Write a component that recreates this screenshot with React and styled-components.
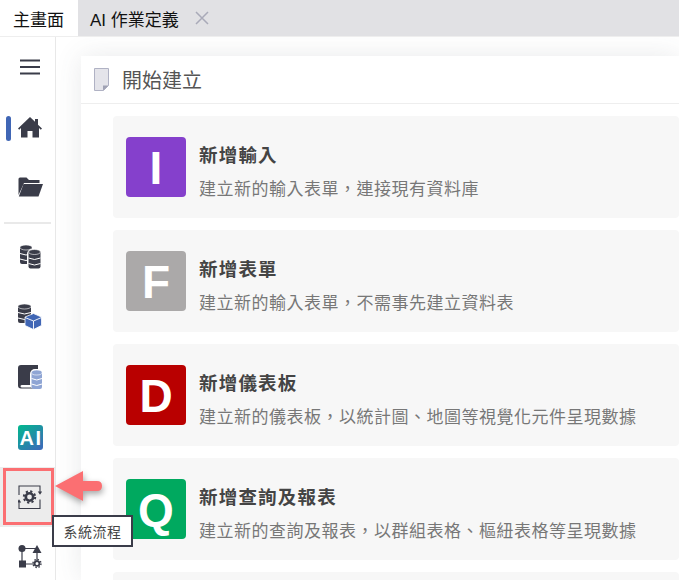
import styled, { createGlobalStyle } from 'styled-components';

const Global = createGlobalStyle`
  html, body { margin: 0; padding: 0; background: #fff; overflow: hidden; }
  body { font-family: "Liberation Sans", "Noto Sans CJK TC", sans-serif; }
`;

const items = [
  { letter: 'I', color: '#8540cc', title: '新增輸入', desc: '建立新的輸入表單\uFF0C連接現有資料庫' },
  { letter: 'F', color: '#aba9a9', title: '新增表單', desc: '建立新的輸入表單\uFF0C不需事先建立資料表' },
  { letter: 'D', color: '#b90000', title: '新增儀表板', desc: '建立新的儀表板\uFF0C以統計圖、地圖等視覺化元件呈現數據' },
  { letter: 'Q', color: '#00a95f', title: '新增查詢及報表', desc: '建立新的查詢及報表\uFF0C以群組表格、樞紐表格等呈現數據' },
];

function Db({ x, y, fill = '#3a3c49', w = 12 }) {
  const h = 20;
  return (
    <g transform={`translate(${x} ${y})`}>
      <rect x="0" y="1" width={w} height={h - 2} rx="2" fill={fill} />
      <ellipse cx={w / 2} cy="2.5" rx={w / 2} ry="2.5" fill={fill} stroke="#fff" strokeWidth="0.6" />
      <path d={`M0 8.5q${w / 2} 3 ${w} 0M0 14q${w / 2} 3 ${w} 0`} stroke="#fff" strokeWidth="1" fill="none" />
    </g>
  );
}

function App() {
  return (
    <Page>
      <Global />
      <TabBar>
        <Tab $active>主畫面</Tab>
        <Tab>
          AI 作業定義
          <CloseIcon viewBox="0 0 14 14">
            <path d="M1 1l12 12M13 1L1 13" stroke="#a9aab8" strokeWidth="1.5" fill="none" />
          </CloseIcon>
        </Tab>
      </TabBar>
      <Body>
        <Sidebar>
          <SideItem>
            <svg width="20" height="16" viewBox="0 0 20 16">
              <path d="M0 1.500h20M0 8h20M0 14.500h20" stroke="#3a3c49" strokeWidth="2.200" />
            </svg>
          </SideItem>
          <SideItem>
            <ActiveMark />
            <svg width="24" height="21" viewBox="0 0 24 21">
              <path d="M12 0L0 11.500l1.200 1.200L3 11v9.500h6.500V14h5v6.500H21V11l1.800 1.700L24 11.500 20 7.700V2h-3v2.800z" fill="#3a3c49" />
            </svg>
          </SideItem>
          <SideItem>
            <svg width="25" height="20" viewBox="0 0 25 20">
              <path d="M0.500 18V2Q0.500 0.500 2 0.500H8.500L11 3H21.500V6H6L0.500 18z" fill="#3a3c49" />
              <path d="M5.500 7H25L20.500 19.500H0.800z" fill="#3a3c49" />
            </svg>
          </SideItem>
          <Divider />
          <SideItem>
            <svg width="22" height="25" viewBox="0 0 22 25">
              <Db x="1" y="0" />
              <rect x="8" y="4" width="14" height="21" rx="5" fill="#fff" />
              <Db x="9.500" y="4.500" />
            </svg>
          </SideItem>
          <SideItem>
            <svg width="24" height="26" viewBox="0 0 24 26">
              <Db x="0" y="0" w="13" />
              <path d="M15.500 9.500l8 3.500v8.500l-8 4-8.500-4V13z" fill="#4066b5" stroke="#fff" strokeWidth="0.800" />
              <path d="M7 13.500l8.500 3.500 8-3.500M15.500 17v8.500" stroke="#fff" strokeWidth="0.900" fill="none" />
            </svg>
          </SideItem>
          <SideItem>
            <svg width="25" height="24" viewBox="0 0 25 24">
              <path d="M3 0h17v20H4q-1.500 0-1.500 1.200T4 22.500h16v1H3q-3 0-3-3V3q0-3 3-3z" fill="#3a3c49" />
              <rect x="12" y="4" width="13" height="20" rx="5" fill="#fff" />
              <Db x="13.500" y="5" fill="#8fa5d4" w="10.500" />
            </svg>
          </SideItem>
          <SideItem>
            <svg width="25" height="25" viewBox="0 0 25 25">
              <defs>
                <linearGradient id="aiGrad" x1="0" y1="0" x2="0.800" y2="1">
                  <stop offset="0" stopColor="#00b98d" />
                  <stop offset="1" stopColor="#3a6db8" />
                </linearGradient>
              </defs>
              <rect width="25" height="25" rx="3" fill="url(#aiGrad)" />
              <text x="13" y="19.500" textAnchor="middle" fontFamily="Liberation Sans" fontWeight="700" fontSize="20" letterSpacing="1.500" fill="#fff">AI</text>
            </svg>
          </SideItem>
          <SideItem $hover>
            <svg width="24" height="24" viewBox="0 0 24 24">
              <path d="M1 10V1H22V7M22 14.500V23.500H1V16" stroke="#3a3c49" strokeWidth="1.100" fill="none" />
              <path d="M19.800 6.500h4.400L22 9.800zM-1.200 17.500h4.400L1 14.200z" fill="#3a3c49" />
              <circle cx="11.500" cy="12" r="3.700" fill="none" stroke="#3a3c49" strokeWidth="2.600" />
              <circle cx="11.500" cy="12" r="5.700" fill="none" stroke="#3a3c49" strokeWidth="2" strokeDasharray="2.200 2.276" />
            </svg>
          </SideItem>
          <SideItem>
            <svg width="25" height="25" viewBox="0 0 25 25">
              <path d="M4 3.500h15M4 3.500v15M4 19h15M19 8v8" stroke="#3a3c49" strokeWidth="1.200" fill="none" />
              <circle cx="4" cy="3.500" r="3.500" fill="#3a3c49" />
              <path d="M19 0l4.500 8h-9z" fill="#3a3c49" />
              <rect x="1" y="15.500" width="7" height="7" fill="#3a3c49" />
              <circle cx="19" cy="18.500" r="2.400" fill="#fff" stroke="#3a3c49" strokeWidth="1.800" />
              <circle cx="19" cy="18.500" r="4" fill="none" stroke="#3a3c49" strokeWidth="1.400" strokeDasharray="1.500 1.640" />
            </svg>
          </SideItem>
        </Sidebar>
        <Main>
          <Card>
            <CardHeader>
              <svg width="15" height="23" viewBox="0 0 15 23">
                <path d="M0.500 0.500h14v17l-5 5h-9z" fill="#e4e4ea" stroke="#b0b2c4" strokeWidth="1" />
                <path d="M9 22.500v-5h5.500z" fill="#a0a2b4" />
              </svg>
              <CardTitle>開始建立</CardTitle>
            </CardHeader>
            <List>
              {items.map((item) => (
                <Row key={item.letter}>
                  <Badge $color={item.color}>{item.letter}</Badge>
                  <RowText>
                    <RowTitle>{item.title}</RowTitle>
                    <RowDesc>{item.desc}</RowDesc>
                  </RowText>
                </Row>
              ))}
              <Row />
            </List>
          </Card>
        </Main>
      </Body>
      <Highlight />
      <Arrow width="48" height="32" viewBox="0 0 48 32">
        <path d="M0 15L28 0V10H42Q47 10 47 15T42 20H28V30z" fill="#fb6f72" />
      </Arrow>
      <Tooltip>系統流程</Tooltip>
    </Page>
  );
}

const Page = styled.div`
  position: relative;
  width: 679px;
  height: 580px;
  overflow: hidden;
  background: #fff;
`;

const TabBar = styled.div`
  display: flex;
  height: 36px;
  background: #e1e1e4;
  border-bottom: 1px solid #eeeeee;
`;

const Tab = styled.div`
  display: flex;
  align-items: center;
  width: ${(p) => (p.$active ? '78px' : 'auto')};
  padding-left: ${(p) => (p.$active ? '13px' : '12px')};
  box-sizing: border-box;
  background: ${(p) => (p.$active ? '#fff' : 'transparent')};
  font-size: 17px;
  color: #111;
`;

const CloseIcon = styled.svg`
  width: 14px;
  height: 14px;
  margin-left: 16px;
`;

const Body = styled.div`
  display: flex;
  height: 543px;
`;

const Sidebar = styled.div`
  flex: none;
  width: 55px;
  border-right: 1px solid #e8e8e8;
  background: #fff;
  display: flex;
  flex-direction: column;
  align-items: stretch;
`;

const SideItem = styled.div`
  position: relative;
  flex: none;
  height: 60px;
  display: flex;
  align-items: center;
  justify-content: center;
  padding-left: 5px;
  background: ${(p) => (p.$hover ? '#ececec' : 'transparent')};
`;

const ActiveMark = styled.span`
  position: absolute;
  left: 6px;
  top: 19px;
  width: 5px;
  height: 25px;
  border-radius: 3px;
  background: #4066b5;
`;

const Divider = styled.div`
  flex: none;
  height: 2px;
  margin: 5px 4px 3px;
  background: #e9e9e9;
`;

const Main = styled.div`
  flex: 1;
  min-width: 0;
  overflow: hidden;
  padding: 19px 0 0 25px;
  background: #fff;
`;

const Card = styled.div`
  background: #fff;
  height: 100%;
  box-shadow: 0 0 26px rgba(70, 80, 90, 0.12);
`;

const CardHeader = styled.div`
  display: flex;
  align-items: center;
  gap: 13px;
  height: 47px;
  padding-left: 13px;
  border-bottom: 1px solid #eeeeee;
`;

const CardTitle = styled.div`
  font-size: 20px;
  color: #555;
`;

const List = styled.div`
  display: flex;
  flex-direction: column;
  gap: 12px;
  padding: 12px 0 0 32px;
`;

const Row = styled.div`
  flex: none;
  display: flex;
  align-items: center;
  gap: 13px;
  height: 102px;
  padding-left: 13px;
  background: #f7f7f7;
  border-radius: 4px;
`;

const Badge = styled.div`
  flex: none;
  width: 60px;
  height: 60px;
  padding-top: 2px;
  box-sizing: border-box;
  border-radius: 4px;
  background: ${(p) => p.$color};
  color: #fff;
  font-size: 46px;
  font-weight: 700;
  display: flex;
  align-items: center;
  justify-content: center;
`;

const RowText = styled.div`
  display: flex;
  flex-direction: column;
  gap: 8.500px;
  padding-top: 10.500px;
`;

const RowTitle = styled.div`
  font-size: 18.500px;
  line-height: 26px;
  letter-spacing: 1.200px;
  font-weight: 700;
  color: #444;
`;

const RowDesc = styled.div`
  font-size: 17px;
  line-height: 24px;
  letter-spacing: 0.500px;
  color: #777;
  white-space: nowrap;
`;

const Highlight = styled.div`
  position: absolute;
  left: 3px;
  top: 468px;
  width: 45px;
  height: 51px;
  border: 3px solid #fb6f72;
`;

const Arrow = styled.svg`
  position: absolute;
  left: 55px;
  top: 471px;
  filter: drop-shadow(1px 3px 3px rgba(0, 0, 0, 0.35));
`;

const Tooltip = styled.div`
  position: absolute;
  left: 52px;
  top: 515px;
  width: 77px;
  height: 28px;
  border: 2px solid #3a3c49;
  background: #fff;
  font-size: 14px;
  letter-spacing: 0.500px;
  color: #444;
  display: flex;
  align-items: center;
  justify-content: center;
`;

export default App;
